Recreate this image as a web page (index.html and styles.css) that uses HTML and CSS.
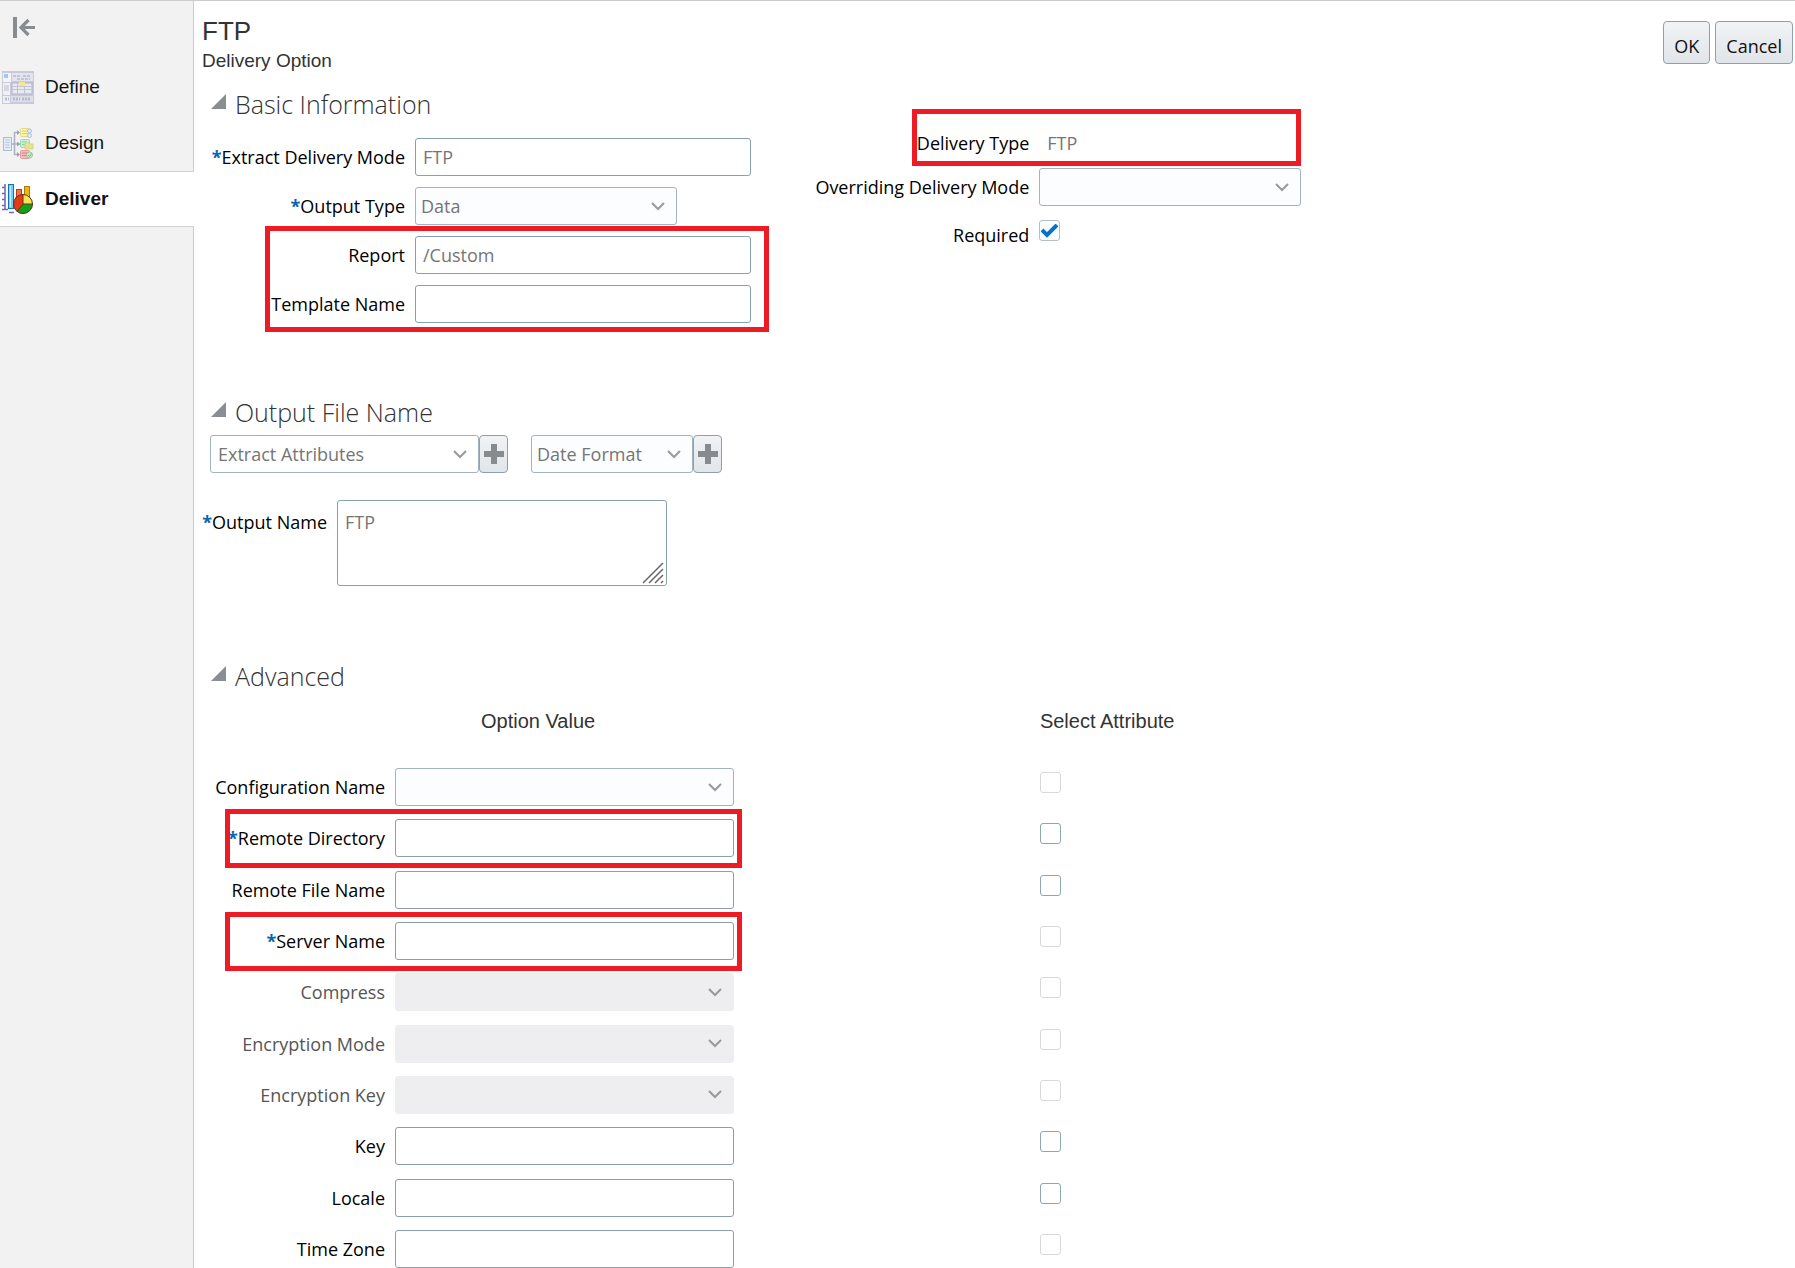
FILE: index.html
```html
<!DOCTYPE html>
<html lang="en">
<head>
  <meta charset="UTF-8" />
  <meta name="viewport" content="width=device-width, initial-scale=1.0"/>
  <title>FTP Delivery Option</title>
  <link rel="stylesheet" href="styles.css">
</head>
<body>
  <aside class="sidebar">
    <button class="collapse" type="button" aria-label="Collapse">
      <svg width="24" height="22" viewBox="0 0 24 22">
        <rect x="1" y="0" width="4" height="21" fill="#878c91"/>
        <path d="M23 10.5H10M16.500 3l-7.500 7.500 7.500 7.500" fill="none" stroke="#878c91" stroke-width="3.200"/>
      </svg>
    </button>
    <nav>
      <a class="nav-item" href="#">
        <svg width="32" height="33" viewBox="0 0 32 33">
          <rect width="32" height="33" fill="#c9c9dc"/>
          <rect x="1" y="2" width="8" height="9" fill="#f3f4fa"/>
          <rect x="2" y="3" width="4" height="4" fill="#a9c4e6"/>
          <rect x="10" y="2" width="21" height="8" fill="#e4e4ee"/>
          <path d="M11 5h8M21 5h8M15 8h13" stroke="#c4c4d4" stroke-width="2" stroke-dasharray="3 1"/>
          <rect x="1" y="12" width="7" height="12" fill="#f0f0f5"/>
          <path d="M2 15h5M2 17h5M2 19h5" stroke="#bcbccd"/>
          <rect x="10" y="12" width="20" height="11" fill="#e9e9f1" stroke="#b3b3c8"/>
          <path d="M10 15.500h20M10 18.500h20M15.500 12v11M22.500 12v11" stroke="#c3c3d4"/>
          <rect x="17" y="11" width="6" height="4" fill="#f5e98b"/>
          <rect x="1" y="25" width="7" height="7" fill="#f0f0f5"/>
          <rect x="9" y="25" width="22" height="6" fill="#dedee9"/>
          <path d="M3 28h4M11 28h7M20 28h9" stroke="#b9b9cb" stroke-width="3" stroke-dasharray="2 1"/>
        </svg>
        Define
      </a>
      <a class="nav-item" href="#">
        <svg width="32" height="33" viewBox="0 0 32 33">
          <path d="M10 17h8M12.500 17V5.500H17M12.500 17v10.500H17" fill="none" stroke="#a9b1c6" stroke-width="1.500"/>
          <path d="M15 3l3 2.500-3 2.500zM15 14.500l3 2.500-3 2.500zM15 25l3 2.500-3 2.500z" fill="#8ea2c4"/>
          <rect x="1.500" y="10.500" width="8" height="13" fill="#e3ecf7" stroke="#a9bcd6"/>
          <path d="M3 13h5M3 15.500h5M3 18h5M3 20.500h5" stroke="#b7cbe2"/>
          <rect x="18.500" y="1.500" width="9" height="8" rx="1" fill="#fbf4a6" stroke="#e3d98a"/>
          <path d="M20 4h6M20 6.500h6" stroke="#ddd07a"/>
          <circle cx="27.500" cy="4" r="2" fill="#e2edf9" stroke="#a9c1e2"/>
          <circle cx="27.500" cy="8.500" r="2" fill="#e2edf9" stroke="#a9c1e2"/>
          <rect x="18.500" y="12.500" width="9" height="8" rx="1" fill="#c9efd2" stroke="#a4d8b2"/>
          <path d="M20 15h5M20 17.500h5" stroke="#8ed1a1"/>
          <path d="M23 16h4l1 1h3v5h-8z" fill="#e9e390" stroke="#cfd58b"/>
          <rect x="18.500" y="23.500" width="9" height="8" rx="1" fill="#f7b9bb" stroke="#e79ba0"/>
          <path d="M20 26h6M20 28.500h6" stroke="#e38389"/>
          <circle cx="27.500" cy="28" r="3" fill="#d0ecd0" stroke="#93c79a"/>
          <path d="M26 28l1.500 1.500 2-3" fill="none" stroke="#6fb27a"/>
        </svg>
        Design
      </a>
      <a class="nav-item active" href="#">
        <svg width="32" height="33" viewBox="0 0 32 33">
          <path d="M3 1v26M0 4.500h3M0 10.500h3M0 16.500h3M0 22.500h3M0 26.500h6M7 29.500h5" fill="none" stroke="#6f66ad" stroke-width="1.500"/>
          <rect x="6.500" y="1.500" width="5" height="24" fill="#6ed0fb" stroke="#0a78b8"/>
          <rect x="8" y="3" width="1" height="21" fill="#c6eeff"/>
          <rect x="14.500" y="6.500" width="5" height="12" fill="#ee7350" stroke="#b83b1e"/>
          <rect x="22.500" y="3.500" width="5" height="14" fill="#edb711" stroke="#a87c05"/>
          <circle cx="21" cy="21" r="9.500" fill="#e33a12"/>
          <path d="M21 21V11.500A9.500 9.500 0 0 1 30.500 21z" fill="#fbe05a"/>
          <path d="M21 21h9.500A9.500 9.500 0 0 1 15 28.400z" fill="#12a019"/>
          <path d="M21 11v10h10M21 21l-6 7.500" fill="none" stroke="#5b3a0a"/>
          <circle cx="21" cy="21" r="9.500" fill="none" stroke="#5f3410"/>
        </svg>
        Deliver
      </a>
    </nav>
  </aside>

  <main class="content">
    <header class="page-head">
      <div>
        <h1>FTP</h1>
        <p>Delivery Option</p>
      </div>
      <div class="actions">
        <button class="btn" type="button">OK</button>
        <button class="btn" type="button">Cancel</button>
      </div>
    </header>

    <section class="basic">
      <h2>
        <button class="toggle" type="button" aria-label="Collapse Basic Information"><svg width="15" height="15" viewBox="0 0 15 15"><path d="M15 0v15H0z" fill="#8a8e92"/></svg></button>
        Basic Information
      </h2>
      <div class="columns">
        <div class="left-col">
          <div class="row">
            <label for="mode"><span class="req">*</span>Extract Delivery Mode</label>
            <input class="field" type="text" id="mode" value="FTP">
          </div>
          <div class="row">
            <label for="output-type"><span class="req">*</span>Output Type</label>
            <select class="field medium" id="output-type"><option>Data</option></select>
          </div>
          <div class="group marked">
            <div class="row">
              <label for="report">Report</label>
              <input class="field" type="text" id="report" value="/Custom">
            </div>
            <div class="row">
              <label for="template">Template Name</label>
              <input class="field" type="text" id="template">
            </div>
          </div>
        </div>
        <div class="right-col">
          <div class="row marked">
            <span class="label">Delivery Type</span>
            <span class="value">FTP</span>
          </div>
          <div class="row">
            <label for="override">Overriding Delivery Mode</label>
            <select class="field medium" id="override"><option></option></select>
          </div>
          <div class="row check-row">
            <label for="required">Required</label>
            <input class="check" type="checkbox" id="required" checked>
          </div>
        </div>
      </div>
    </section>

    <section class="output">
      <h2>
        <button class="toggle" type="button" aria-label="Collapse Output File Name"><svg width="15" height="15" viewBox="0 0 15 15"><path d="M15 0v15H0z" fill="#8a8e92"/></svg></button>
        Output File Name
      </h2>
      <div class="pickers">
        <div class="picker">
          <select class="field attributes" aria-label="Extract Attributes"><option>Extract Attributes</option></select>
          <button class="btn add" type="button" aria-label="Add attribute"><svg width="20" height="20" viewBox="0 0 20 20"><path d="M7 0h6v7h7v6h-7v7H7v-7H0V7h7z" fill="#868b90"/></svg></button>
        </div>
        <div class="picker">
          <select class="field date" aria-label="Date Format"><option>Date Format</option></select>
          <button class="btn add" type="button" aria-label="Add date format"><svg width="20" height="20" viewBox="0 0 20 20"><path d="M7 0h6v7h7v6h-7v7H7v-7H0V7h7z" fill="#868b90"/></svg></button>
        </div>
      </div>
      <div class="output-name">
        <label for="output-name"><span class="req">*</span>Output Name</label>
        <textarea class="field" id="output-name">FTP</textarea>
      </div>
    </section>

    <section class="advanced">
      <h2>
        <button class="toggle" type="button" aria-label="Collapse Advanced"><svg width="15" height="15" viewBox="0 0 15 15"><path d="M15 0v15H0z" fill="#8a8e92"/></svg></button>
        Advanced
      </h2>
      <div class="option-head">
        <span class="option-title">Option Value</span>
        <span>Select Attribute</span>
      </div>
      <div class="options">
        <div class="option">
          <div class="row">
            <label for="config">Configuration Name</label>
            <select class="field" id="config"><option></option></select>
          </div>
          <input class="check" type="checkbox" aria-label="Select Configuration Name" disabled>
        </div>
        <div class="option">
          <div class="row marked">
            <label for="directory"><span class="req">*</span>Remote Directory</label>
            <input class="field" type="text" id="directory">
          </div>
          <input class="check" type="checkbox" aria-label="Select Remote Directory">
        </div>
        <div class="option">
          <div class="row">
            <label for="file-name">Remote File Name</label>
            <input class="field" type="text" id="file-name">
          </div>
          <input class="check" type="checkbox" aria-label="Select Remote File Name">
        </div>
        <div class="option">
          <div class="row marked">
            <label for="server"><span class="req">*</span>Server Name</label>
            <input class="field" type="text" id="server">
          </div>
          <input class="check" type="checkbox" aria-label="Select Server Name" disabled>
        </div>
        <div class="option">
          <div class="row off">
            <label for="compress">Compress</label>
            <select class="field" id="compress" disabled><option></option></select>
          </div>
          <input class="check" type="checkbox" aria-label="Select Compress" disabled>
        </div>
        <div class="option">
          <div class="row off">
            <label for="enc-mode">Encryption Mode</label>
            <select class="field" id="enc-mode" disabled><option></option></select>
          </div>
          <input class="check" type="checkbox" aria-label="Select Encryption Mode" disabled>
        </div>
        <div class="option">
          <div class="row off">
            <label for="enc-key">Encryption Key</label>
            <select class="field" id="enc-key" disabled><option></option></select>
          </div>
          <input class="check" type="checkbox" aria-label="Select Encryption Key" disabled>
        </div>
        <div class="option">
          <div class="row">
            <label for="key">Key</label>
            <input class="field" type="text" id="key">
          </div>
          <input class="check" type="checkbox" aria-label="Select Key">
        </div>
        <div class="option">
          <div class="row">
            <label for="locale">Locale</label>
            <input class="field" type="text" id="locale">
          </div>
          <input class="check" type="checkbox" aria-label="Select Locale">
        </div>
        <div class="option">
          <div class="row">
            <label for="zone">Time Zone</label>
            <input class="field" type="text" id="zone">
          </div>
          <input class="check" type="checkbox" aria-label="Select Time Zone" disabled>
        </div>
      </div>
    </section>
  </main>
</body>
</html>
```

FILE: styles.css
```css
* {
  box-sizing: border-box;
}

body {
  margin: 0;
  min-height: 100vh;
  display: flex;
  border-top: 1px solid #ccc;
  background: #fff;
  color: #000;
  font-family: "Open Sans", "Noto Sans", sans-serif;
  font-size: 18px;
  line-height: 24px;
}

h1, h2, p {
  margin: 0;
  font-weight: normal;
}

button, input, select, textarea {
  margin: 0;
  font: inherit;
}

/* sidebar */
.sidebar {
  flex: 0 0 194px;
  background: #f2f2f2;
  box-shadow: inset -1px 0 #ccc;
}

.collapse, .toggle {
  display: block;
  padding: 0;
  border: 0;
  background: none;
  line-height: 0;
}

.collapse {
  margin: 16px 12px 20px;
}

.nav-item {
  display: flex;
  align-items: center;
  gap: 11px;
  height: 56px;
  padding-left: 2px;
  color: #111;
  font-family: "Liberation Sans", Arial, sans-serif;
  font-size: 19px;
  text-decoration: none;
}

.nav-item.active {
  border-top: 1px solid #d2d2d2;
  border-bottom: 1px solid #d2d2d2;
  background: #fff;
  font-weight: bold;
}

/* header */
.content {
  flex: 1;
  padding-left: 8px;
}

.page-head {
  display: flex;
  justify-content: space-between;
  padding-top: 14px;
  color: #333;
  font-family: "Liberation Sans", Arial, sans-serif;
}

.page-head h1 {
  font-size: 26px;
  line-height: 32px;
}

.page-head p {
  font-size: 19px;
  line-height: 28px;
}

.actions {
  display: flex;
  align-items: flex-start;
  gap: 5px;
  padding: 6px 2px 0 0;
}

.btn {
  height: 43px;
  padding: 6px 10px 0;
  border: 1px solid #8ba1b2;
  border-radius: 4px;
  background: linear-gradient(#f1f3f5, #e1e5e9);
  color: #111;
  font-family: "Open Sans", "Noto Sans", sans-serif;
}

h2 {
  display: flex;
  align-items: flex-start;
  gap: 9px;
  padding-left: 9px;
  color: #333;
  font-size: 25px;
  font-weight: 300;
  line-height: 32px;
}

.toggle {
  margin-top: 6px;
}

/* form rows */
.row {
  position: relative;
  display: flex;
  align-items: center;
  gap: 10px;
  height: 38px;
}

.row label, .label {
  text-align: right;
  white-space: nowrap;
}

.req {
  color: #0a63b3;
  font-weight: bold;
}

.field {
  width: 336px;
  height: 38px;
  padding: 0 7px;
  border: 1px solid #8ba0ae;
  border-radius: 3px;
  background: #fff;
  color: #757575;
}

select.field {
  appearance: none;
  padding: 0 40px 0 5px;
  border-color: #a3b4c0;
  background: #fcfdff url("data:image/svg+xml,%3Csvg xmlns='http://www.w3.org/2000/svg' width='14' height='9'%3E%3Cpath d='M1 1l6 6 6-6' fill='none' stroke='%23999' stroke-width='2'/%3E%3C/svg%3E") no-repeat right 11px center;
}

.field.medium {
  width: 262px;
}

.off label {
  color: #555;
}

.row.off .field {
  border-color: #eeeef0;
  background-color: #eeeef0;
  opacity: 1;
}

.check {
  appearance: none;
  width: 21px;
  height: 21px;
  border: 1px solid #8fa5b3;
  border-radius: 3px;
  background: #fff;
}

.check:disabled {
  border-color: #d9d9d9;
}

.check:checked {
  border-color: #b4c0c9;
  background: #fcfdff url("data:image/svg+xml,%3Csvg xmlns='http://www.w3.org/2000/svg' width='17' height='14'%3E%3Cpath d='M1 6l5 5 10-10' fill='none' stroke='%230572ce' stroke-width='4'/%3E%3C/svg%3E") no-repeat center;
}

.marked {
  position: relative;
}

.marked::after {
  content: "";
  position: absolute;
  border: 5px solid #ed1c24;
  pointer-events: none;
}

/* basic information */
.basic {
  padding-top: 13px;
}

.columns {
  display: flex;
}

.left-col {
  flex: 0 0 38%;
  padding-top: 18px;
}

.left-col, .group {
  display: flex;
  flex-direction: column;
  gap: 11px;
}

.left-col label {
  width: 203px;
}

.group::after {
  inset: -10px 38px -9px 63px;
}

.right-col {
  display: flex;
  flex-direction: column;
  gap: 6px;
  padding-top: 4px;
}

.right-col label, .label {
  width: 222px;
}

.right-col .marked::after {
  inset: -15px 0 -4px 105px;
}

.value {
  padding-left: 8px;
  color: #757575;
}

.check-row {
  height: 46px;
}

.check-row .check {
  align-self: flex-start;
  margin-top: 8px;
}

/* output file name */
.output {
  padding-top: 73px;
}

.pickers {
  display: flex;
  gap: 23px;
  padding: 7px 0 0 8px;
}

.picker {
  display: flex;
}

.field.attributes {
  width: 269px;
  padding-left: 7px;
  background-color: #fff;
}

.field.date {
  width: 162px;
}

.btn.add {
  width: 29px;
  height: 38px;
  padding: 0;
  line-height: 0;
}

.output-name {
  display: flex;
  align-items: flex-start;
  gap: 10px;
  padding-top: 27px;
}

.output-name label {
  width: 125px;
  padding-top: 10px;
  text-align: right;
  white-space: nowrap;
}

.output-name .field {
  width: 330px;
  height: 86px;
  padding-top: 9px;
  resize: none;
  background: #fff url("data:image/svg+xml,%3Csvg xmlns='http://www.w3.org/2000/svg' width='22' height='22'%3E%3Cpath d='M1 21L21 1M7 21L21 7M13 21l8-8M19 21l2-2' fill='none' stroke='%23666' stroke-width='1.5'/%3E%3C/svg%3E") no-repeat right 2px bottom 1px;
}

/* advanced */
.advanced {
  padding-top: 74px;
}

.option-head, .option {
  display: grid;
  grid-template-columns: 52.6% 1fr;
}

.option-head {
  padding: 15px 0 33px;
  color: #333;
  font-family: "Liberation Sans", Arial, sans-serif;
  font-size: 20px;
  line-height: 28px;
}

.option-title {
  padding-left: 279px;
}

.options {
  display: grid;
  align-content: space-between;
  min-height: 500px;
}

.option .row {
  justify-self: start;
}

.option .row label {
  width: 183px;
}

.option .field {
  width: 339px;
}

.option .check {
  margin-top: 4px;
}

.option .marked::after {
  inset: -10px -8px -11px 23px;
}
```
